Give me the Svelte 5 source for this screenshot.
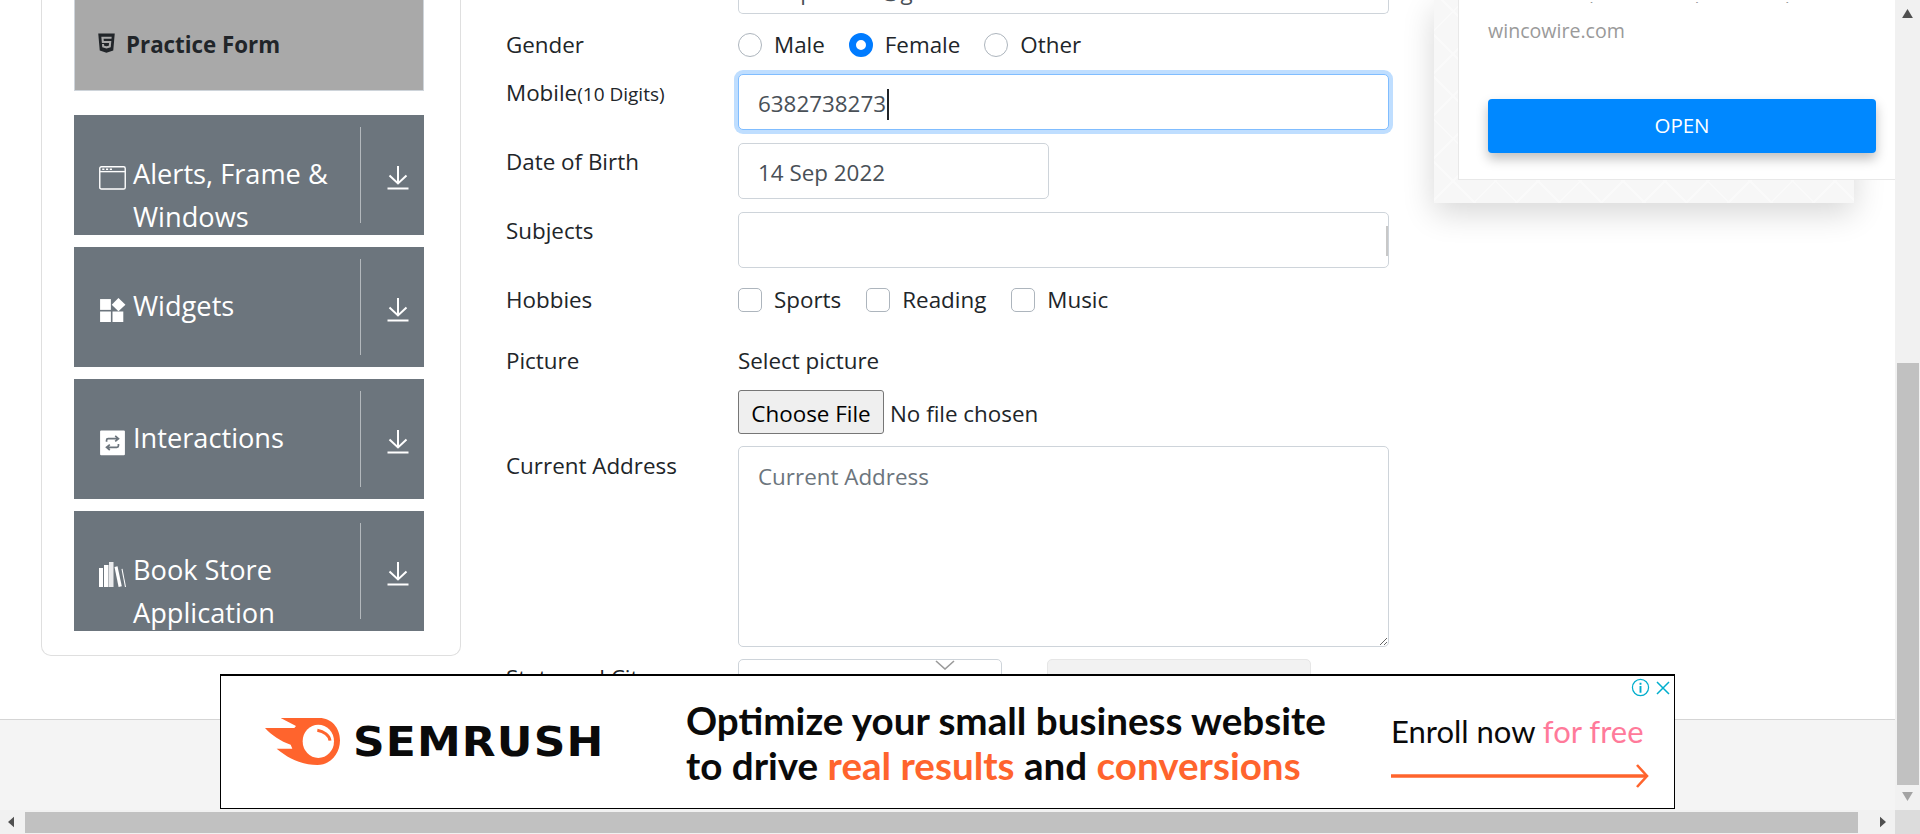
<script lang="ts">
    const menu = [
        { id: 'alerts', lines: ['Alerts, Frame &', 'Windows'] },
        { id: 'widgets', lines: ['Widgets'] },
        { id: 'interactions', lines: ['Interactions'] },
        { id: 'books', lines: ['Book Store', 'Application'] }
    ];
</script>

<div class="viewport">
    <div class="page">
        <div class="content">
            <aside class="card">
                <div class="current">
                    <svg class="html5" viewBox="0 0 384 512"><path d="M0 32l34.9 395.8L191.5 480l157.6-52.2L384 32H0zm308.2 127.9H124.4l4.1 49.4h175.6l-13.6 148.4-97.9 27v.3h-1.1l-98.7-27.3-6-75.8h47.7L138 320l53.5 14.5 53.7-14.5 6-62.2H84.3L71.5 112.2h241.1l-4.4 47.7z" /></svg>
                    <span>Practice Form</span>
                </div>
                {#each menu as item}
                    <div class="item">
                        <div class="item-label">
                            <span class="item-icon">
                                {#if item.id === 'alerts'}
                                    <svg viewBox="0 0 25 22" fill="none" stroke="#fff" stroke-width="1.3"><rect x="0.7" y="0.7" width="23.6" height="20.6" rx="1.5" /><path d="M1 5.2h23" /><path d="M3 3h2M6.5 3h2M10 3h2" stroke-width="1.6" /></svg>
                                {:else if item.id === 'widgets'}
                                    <svg viewBox="0 0 25 22" fill="#fff"><rect x="1" y="1" width="10" height="10" /><path d="M18 0l6.5 6.2L18 12.2l-6.2-6z" /><rect x="1" y="12.5" width="10" height="10" /><rect x="12.5" y="12.5" width="10" height="10" /></svg>
                                {:else if item.id === 'interactions'}
                                    <svg viewBox="0 0 25 24"><rect x="1" y="0.5" width="23" height="23" rx="1" fill="#fff" /><path d="M7 11V9.5A1.5 1.5 0 0 1 8.5 8H17M15 5.5L18 8l-3 2.5M18 13v1.5a1.5 1.5 0 0 1-1.5 1.5H8M10 13.500L7 16l3 2.500" fill="none" stroke="#6c757d" stroke-width="1.6" /></svg>
                                {:else}
                                    <svg viewBox="0 0 27 25" fill="#fff"><rect x="0" y="6" width="4" height="19" /><rect x="5" y="3" width="4.500" height="22" /><rect x="10" y="0" width="4.500" height="25" opacity="0.85" /><path d="M15.500 5l3-.8 4.300 20-3.200.8z" /><path d="M22.500 7l1-.3 3.500 18.300-1 .2z" /></svg>
                                {/if}
                            </span>
                            <span class="item-text">
                                {#each item.lines as line}
                                    <span>{line}</span>
                                {/each}
                            </span>
                        </div>
                        <div class="item-arrow">
                            <svg viewBox="0 0 22 24" fill="none" stroke="#fff" stroke-width="2"><path d="M11 0v17M2.500 9.500L11 17.500l8.500-8M0.500 22.500h21" /></svg>
                        </div>
                    </div>
                {/each}
            </aside>

            <form class="form">
                <div class="clipped-field"><span>ramprasath@gmail.com</span></div>

                <div class="row gender">
                    <span class="label">Gender</span>
                    <div class="checks">
                        <label class="check"><input type="radio" name="gender" />Male</label>
                        <label class="check"><input type="radio" name="gender" checked />Female</label>
                        <label class="check"><input type="radio" name="gender" />Other</label>
                    </div>
                </div>

                <div class="row mobile">
                    <span class="label">Mobile<small>(10 Digits)</small></span>
                    <div class="field focused">6382738273<i class="caret"></i></div>
                </div>

                <div class="row date">
                    <span class="label">Date of Birth</span>
                    <div class="field short">14 Sep 2022</div>
                </div>

                <div class="row subjects">
                    <span class="label">Subjects</span>
                    <div class="field subject-box"><i class="subject-bar"></i></div>
                </div>

                <div class="row hobbies">
                    <span class="label">Hobbies</span>
                    <div class="checks">
                        <label class="check"><input type="checkbox" />Sports</label>
                        <label class="check"><input type="checkbox" />Reading</label>
                        <label class="check"><input type="checkbox" />Music</label>
                    </div>
                </div>

                <div class="row picture">
                    <span class="label">Picture</span>
                    <div>
                        <div class="select-text">Select picture</div>
                        <div class="file">
                            <button type="button">Choose File</button>
                            <span>No file chosen</span>
                        </div>
                    </div>
                </div>

                <div class="row address">
                    <span class="label">Current Address</span>
                    <textarea placeholder="Current Address"></textarea>
                </div>

                <div class="row state">
                    <span class="label">State and City</span>
                    <div class="selects">
                        <div class="select">
                            <svg viewBox="0 0 20 10" fill="none" stroke="#9a9a9a" stroke-width="1.600"><path d="M1 1l9 8 9-8" /></svg>
                        </div>
                        <div class="select disabled"></div>
                    </div>
                </div>
            </form>

            <div class="promo">
                <div class="promo-inner">
                    <div class="promo-clipped">Buy top quality wire products, supply</div>
                    <div class="promo-site">wincowire.com</div>
                    <div class="promo-button">OPEN</div>
                </div>
            </div>
        </div>
        <footer class="footer"></footer>
    </div>

    <div class="vscroll">
        <svg class="up" viewBox="0 0 12 10"><path d="M6 0l6 10H0z" /></svg>
        <div class="vthumb"></div>
        <svg class="down" viewBox="0 0 12 10"><path d="M6 10L0 0h12z" /></svg>
    </div>
    <div class="hscroll">
        <svg class="left" viewBox="0 0 8 14"><path d="M0 7l8-7v14z" /></svg>
        <div class="hthumb"></div>
        <svg class="right" viewBox="0 0 8 14"><path d="M8 7L0 14V0z" /></svg>
    </div>
    <div class="corner"></div>

    <div class="ad">
        <div class="ad-logo">
            <svg viewBox="75 88 225 141"><path fill="#ff642d" d="M122 88H238C275 88 300 118 300 155C300 195 272 229 232 229C186 229 146 210 110 180H157L152 168C122 158 95 140 75 118H163L168 112z" /><ellipse cx="235" cy="158" rx="47" ry="50" fill="#fff" /><path d="M232 125C252 128 268 140 270 156" fill="none" stroke="#ff642d" stroke-width="9" /></svg>
            <span>SEMRUSH</span>
        </div>
        <div class="ad-headline">
            <div>Optimize your small business website</div>
            <div>to drive <b>real results</b> and <b>conversions</b></div>
        </div>
        <div class="ad-cta">
            <div>Enroll now <em>for free</em></div>
            <svg viewBox="0 0 258 24" fill="none" stroke="#ff642d"><path d="M0 12h255" stroke-width="3.500" /><path d="M246 1l10 11-10 11" stroke-width="2.600" /></svg>
        </div>
        <div class="ad-choices">
            <svg viewBox="0 0 20 20" fill="none" stroke="#00aecd" stroke-width="1.300"><circle cx="10" cy="10" r="8.500" /><path d="M10 8.500v7M10 5v2" stroke-width="2" /></svg>
            <svg viewBox="0 0 14 14" fill="none" stroke="#00aecd" stroke-width="1.500"><path d="M1 1l12 12M13 1L1 13" /></svg>
        </div>
    </div>
</div>

<style>
    :global(body) {
        margin: 0;
        background: #fff;
        font-family: "Open Sans", "Noto Sans", sans-serif;
        color: #212529;
    }
    .viewport {
        position: relative;
        height: 834px;
        width: 1920px;
        overflow: hidden;
        display: grid;
        grid-template-columns: 1fr 25px;
        grid-template-rows: 1fr 24px;
    }
    .page {
        display: flex;
        flex-direction: column;
        overflow: hidden;
    }
    .content {
        height: 719px;
        display: flex;
        overflow: hidden;
    }
    .footer {
        flex: 1;
        background: #f4f4f4;
        border-top: 1px solid #d5d5d5;
    }

    /* sidebar */
    .card {
        box-sizing: border-box;
        margin-left: 41px;
        width: 420px;
        height: 656px;
        padding: 0 36px 0 32px;
        border: 1px solid #dfdfdf;
        border-top: none;
        border-radius: 0 0 10px 10px;
        flex: none;
    }
    .current {
        box-sizing: border-box;
        height: 91px;
        padding: 32px 0 0 23px;
        background: #a9a9a9;
        border: 1px solid #ced4da;
        border-top: none;
        display: flex;
        align-items: flex-start;
        gap: 11px;
        font-size: 22.300px;
        line-height: 26px;
        font-weight: 700;
    }
    .html5 {
        width: 17px;
        height: 22px;
        fill: #212529;
    }
    .item {
        height: 120px;
        margin-top: 12px;
        background: #6c757d;
        color: #fff;
        display: flex;
        overflow: hidden;
    }
    .current + .item {
        margin-top: 24px;
    }
    .item-label {
        box-sizing: border-box;
        width: 287px;
        height: 96px;
        margin-top: 12px;
        padding: 25px 0 0 25px;
        display: flex;
        align-items: flex-start;
        border-right: 1px solid #b3b8bc;
    }
    .item-icon {
        width: 27px;
        height: 26px;
        margin: 14px 7px 0 0;
        flex: none;
    }
    .item-icon svg {
        width: 100%;
        display: block;
    }
    .item-text {
        font-size: 27.200px;
        line-height: 43px;
        display: flex;
        flex-direction: column;
        white-space: nowrap;
    }
    .item-arrow {
        padding: 51px 0 0 26px;
    }
    .item-arrow svg {
        display: block;
        width: 22px;
        height: 24px;
    }

    /* form */
    .form {
        margin-left: 45px;
        width: 883px;
        flex: none;
        font-size: 22.400px;
        line-height: 32px;
    }
    .clipped-field {
        box-sizing: border-box;
        height: 14px;
        margin-left: 232px;
        padding-left: 19px;
        border: 1px solid #ced4da;
        border-top: none;
        border-radius: 0 0 5px 5px;
        overflow: hidden;
        color: #495057;
    }
    .clipped-field span {
        display: block;
        margin-top: -24px;
    }
    .row {
        display: grid;
        grid-template-columns: 232px 651px;
    }
    .gender { margin-top: 15px; }
    .mobile { margin-top: 13px; }
    .date { margin-top: 13px; }
    .subjects { margin-top: 13px; }
    .hobbies { margin-top: 16px; }
    .picture { margin-top: 29px; }
    .address { margin-top: 12px; }
    .state { margin-top: 12px; }
    .label {
        display: block;
        white-space: nowrap;
    }
    .mobile .label,
    .date .label,
    .subjects .label {
        margin-top: 3px;
    }
    .address .label { margin-top: 4px; }
    .state .label { margin-top: 3px; }
    .label small {
        font-size: 19px;
    }
    .checks {
        display: flex;
        gap: 24px;
    }
    .hobbies .checks {
        gap: 25px;
    }
    .check {
        display: flex;
        align-items: center;
        gap: 12px;
    }
    .check input {
        appearance: none;
        width: 24px;
        height: 24px;
        margin: 0;
        background: #fff;
        border: 1px solid #adb5bd;
        box-sizing: border-box;
        flex: none;
    }
    input[type="radio"] {
        border-radius: 50%;
    }
    input[type="radio"]:checked {
        border: 7px solid #007bff;
    }
    input[type="checkbox"] {
        border-radius: 5px;
    }
    .field {
        box-sizing: border-box;
        height: 56px;
        padding: 4px 19px 0;
        display: flex;
        align-items: center;
        border: 1px solid #ced4da;
        border-radius: 5px;
        color: #495057;
        background: #fff;
        position: relative;
    }
    .focused {
        border-color: #80bdff;
        box-shadow: 0 0 0 4px #bfdeff;
    }
    .caret {
        width: 1.500px;
        height: 31px;
        background: #212529;
        margin-left: 1px;
    }
    .short {
        width: 311px;
    }
    .subject-bar {
        position: absolute;
        right: 0;
        top: 13px;
        width: 2px;
        height: 30px;
        background: #c8c8c8;
    }
    .select-text {
        line-height: 32px;
    }
    .file {
        margin-top: 13px;
        display: flex;
        align-items: center;
        gap: 6px;
    }
    .file span {
        padding-top: 3px;
    }
    .file button {
        box-sizing: border-box;
        width: 146px;
        height: 44px;
        padding: 3px 0 0;
        background: #efefef;
        border: 1px solid #767676;
        border-radius: 3px;
        font: inherit;
        color: #000;
    }
    textarea {
        box-sizing: border-box;
        width: 651px;
        height: 201px;
        padding: 14px 19px;
        margin: 0;
        border: 1px solid #ced4da;
        border-radius: 5px;
        font: inherit;
        color: #495057;
        display: block;
    }
    textarea::placeholder {
        color: #6c757d;
    }
    .selects {
        display: flex;
        gap: 45px;
    }
    .select {
        box-sizing: border-box;
        width: 264px;
        height: 56px;
        border: 1px solid #ced4da;
        border-radius: 5px;
        padding: 0 0 0 196px;
    }
    .select svg {
        width: 20px;
        height: 10px;
        display: block;
    }
    .disabled {
        background: #f2f2f2;
        border-color: #e6e6e6;
    }

    /* right side promo */
    .promo {
        margin-left: 45px;
        width: 420px;
        height: 203px;
        flex: none;
        padding: 0 0 23px 24px;
        box-sizing: border-box;
        background-color: #f7f7f7;
        background-image:
            repeating-linear-gradient(45deg, transparent 0 28px, #fafafa 28px 30px),
            repeating-linear-gradient(-45deg, transparent 0 28px, #fafafa 28px 30px);
        box-shadow: 0 10px 30px rgba(0, 0, 0, 0.16);
    }
    .promo-inner {
        box-sizing: border-box;
        width: 460px;
        height: 180px;
        padding-left: 29px;
        background: #fff;
        border: 1px solid #e8e8e8;
        border-top: none;
        overflow: hidden;
    }
    .promo-clipped {
        height: 3px;
        overflow: hidden;
        font-size: 18px;
        line-height: 18px;
        color: #999;
        white-space: nowrap;
    }
    .promo-site {
        margin-top: 16px;
        font-size: 19.600px;
        line-height: 24px;
        color: #9a9a9a;
    }
    .promo-button {
        margin-top: 56px;
        width: 388px;
        height: 54px;
        background: #0088ff;
        border-radius: 4px;
        color: #fff;
        font-size: 20.500px;
        line-height: 52px;
        text-align: center;
        box-shadow: 0 6px 12px rgba(0, 0, 0, 0.25);
    }

    /* scrollbars */
    .vscroll {
        background: #f1f1f1;
        display: flex;
        flex-direction: column;
        align-items: center;
        padding: 9px 0 0;
    }
    .vscroll svg {
        width: 11px;
        height: 9px;
        fill: #505050;
    }
    .vscroll .down {
        fill: #a3a3a3;
        margin-top: 7px;
    }
    .vthumb {
        width: 22px;
        height: 422px;
        margin-top: 345px;
        background: #c1c1c1;
    }
    .hscroll {
        background: #f1f1f1;
        display: flex;
        align-items: center;
        padding: 0 9px 0 8px;
        gap: 11px;
    }
    .hscroll svg {
        width: 6px;
        height: 12px;
        fill: #505050;
        flex: none;
    }
    .hthumb {
        flex: 1;
        height: 21px;
        background: #c1c1c1;
        margin-right: 11px;
    }
    .corner {
        background: #dcdcdc;
    }

    /* banner ad, floats over the page */
    .ad {
        position: absolute;
        left: 220px;
        top: 674px;
        box-sizing: border-box;
        width: 1455px;
        height: 135px;
        background: #fff;
        border: 1px solid #000;
        border-top-width: 2px;
        display: flex;
        color: #0a0a0a;
    }
    .ad-logo {
        display: flex;
        align-items: center;
        margin: 43px 0 0 44px;
        height: 45px;
        gap: 13px;
        width: 421px;
        flex: none;
    }
    .ad-logo svg {
        width: 75px;
        height: 47px;
        flex: none;
    }
    .ad-logo span {
        font-family: "DejaVu Sans", sans-serif;
        font-weight: 700;
        font-size: 40px;
        letter-spacing: 1px;
        transform: scaleX(1.1);
        transform-origin: left center;
    }
    .ad-headline {
        font-family: "Lato", sans-serif;
        font-weight: 700;
        font-size: 38.600px;
        line-height: 45px;
        margin-top: 22px;
        width: 705px;
        flex: none;
        white-space: nowrap;
    }
    .ad-headline b {
        color: #ff642d;
        font-weight: 700;
    }
    .ad-cta {
        font-family: "Lato", sans-serif;
        font-size: 31px;
        line-height: 36px;
        margin-top: 37px;
        white-space: nowrap;
    }
    .ad-cta em {
        font-style: normal;
        color: #ff7a9a;
    }
    .ad-cta svg {
        display: block;
        width: 258px;
        height: 24px;
        margin-top: 15px;
    }
    .ad-choices {
        position: absolute;
        right: 4px;
        top: 2px;
        display: flex;
        align-items: center;
        gap: 6px;
    }
    .ad-choices svg:first-child {
        width: 19px;
        height: 19px;
    }
    .ad-choices svg:last-child {
        width: 14px;
        height: 14px;
    }
</style>
